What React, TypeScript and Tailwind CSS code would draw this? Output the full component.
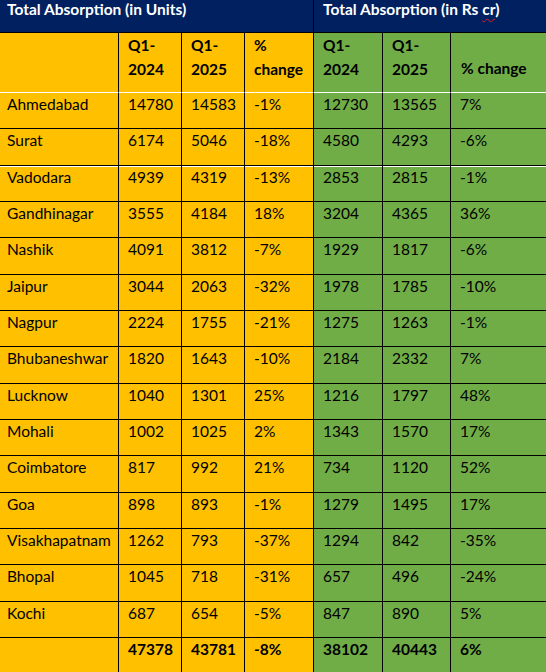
import { FC } from "react";

type Row = [string, string, string, string, string, string, string];

const rows: Row[] = [
	["Ahmedabad", "14780", "14583", "-1%", "12730", "13565", "7%"],
	["Surat", "6174", "5046", "-18%", "4580", "4293", "-6%"],
	["Vadodara", "4939", "4319", "-13%", "2853", "2815", "-1%"],
	["Gandhinagar", "3555", "4184", "18%", "3204", "4365", "36%"],
	["Nashik", "4091", "3812", "-7%", "1929", "1817", "-6%"],
	["Jaipur", "3044", "2063", "-32%", "1978", "1785", "-10%"],
	["Nagpur", "2224", "1755", "-21%", "1275", "1263", "-1%"],
	["Bhubaneshwar", "1820", "1643", "-10%", "2184", "2332", "7%"],
	["Lucknow", "1040", "1301", "25%", "1216", "1797", "48%"],
	["Mohali", "1002", "1025", "2%", "1343", "1570", "17%"],
	["Coimbatore", "817", "992", "21%", "734", "1120", "52%"],
	["Goa", "898", "893", "-1%", "1279", "1495", "17%"],
	["Visakhapatnam", "1262", "793", "-37%", "1294", "842", "-35%"],
	["Bhopal", "1045", "718", "-31%", "657", "496", "-24%"],
	["Kochi", "687", "654", "-5%", "847", "890", "5%"],
];

const total: Row = ["", "47378", "43781", "-8%", "38102", "40443", "6%"];

const cols = "grid grid-cols-[118px_63px_63px_69px_69px_68px_1fr]";

const cellBg = (i: number) => (i < 4 ? "bg-[#ffc000]" : "bg-[#70ad47]");
const cellPad = (i: number) => (i === 0 ? "pl-[7px]" : "pl-[9px]");

const DataRow: FC<{ row: Row; bold?: boolean; whiteTop?: boolean }> = ({ row, bold, whiteTop }) => (
	<div className={`${cols} h-[36.35px] border-b border-black`}>
		{row.map((v, i) => (
			<div
				key={i}
				className={`${cellBg(i)} ${cellPad(i)} ${i > 0 ? "border-l border-black" : ""} ${
					bold ? "font-bold" : ""
				} ${whiteTop ? "shadow-[inset_0_1px_0_#ffffff]" : ""} pt-[1px] leading-[20px]`}
			>
				{v}
			</div>
		))}
	</div>
);

export default function App() {
	return (
		<div className="w-[546px] h-[672px] overflow-hidden bg-white text-black text-[15.5px] font-['Lato',_'Open_Sans',_sans-serif]">
			<div className="flex h-[33px] bg-[#002060] border-b border-black text-white font-bold text-[15.5px] leading-[15px]">
				<div className="w-[313px] pl-[7px] pt-[2px]">Total Absorption (in Units)</div>
				<div className="flex-1 border-l border-black pl-[9px] pt-[2px]">
					Total Absorption (in Rs{" "}
					<span className="underline decoration-wavy decoration-[#e02020] decoration-1 underline-offset-[3px]">cr</span>)
				</div>
			</div>
			<div className={`${cols} h-[60px] border-b border-black font-bold leading-[24px]`}>
				<div className="bg-[#ffc000] border-b border-white"></div>
				<div className="bg-[#ffc000] border-l border-black pl-[9px] pb-[11px] flex flex-col justify-end border-b border-b-white">
					<span>Q1-</span>
					<span>2024</span>
				</div>
				<div className="bg-[#ffc000] border-l border-black pl-[9px] pb-[11px] flex flex-col justify-end border-b border-b-white">
					<span>Q1-</span>
					<span>2025</span>
				</div>
				<div className="bg-[#ffc000] border-l border-black pl-[9px] pb-[11px] flex flex-col justify-end border-b border-b-white">
					<span>%</span>
					<span>change</span>
				</div>
				<div className="bg-[#70ad47] border-l border-black pl-[9px] pb-[11px] flex flex-col justify-end border-b border-b-white">
					<span>Q1-</span>
					<span>2024</span>
				</div>
				<div className="bg-[#70ad47] border-l border-black pl-[9px] pb-[11px] flex flex-col justify-end border-b border-b-white">
					<span>Q1-</span>
					<span>2025</span>
				</div>
				<div className="bg-[#70ad47] border-l border-black pl-[10px] pb-[12px] flex flex-col justify-end border-b border-b-white">
					<span>% change</span>
				</div>
			</div>
			{rows.map((r, i) => (
				<DataRow key={r[0]} row={r} whiteTop={i === 2} />
			))}
			<DataRow row={total} bold />
		</div>
	);
}
